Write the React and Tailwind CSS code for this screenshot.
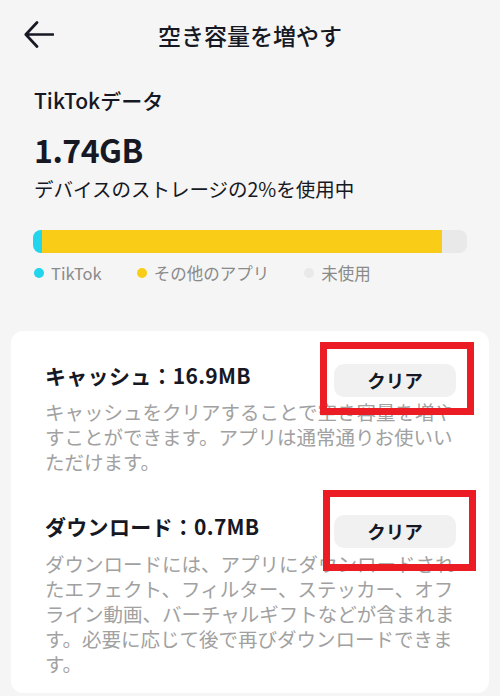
/**
 * FreeUpSpace — TikTok storage screen (空き容量を増やす)
 */
const items = [
  {
    title: 'キャッシュ：16.9MB',
    body: 'キャッシュをクリアすることで空き容量を増やすことができます。アプリは通常通りお使いいただけます。',
    box: 'left-[-14px] right-[-18px] top-[-22px] bottom-[-18px]',
    descGap: 'mt-[2px]',
  },
  {
    title: 'ダウンロード：0.7MB',
    body: 'ダウンロードには、アプリにダウンロードされたエフェクト、フィルター、ステッカー、オフライン動画、バーチャルギフトなどが含まれます。必要に応じて後で再びダウンロードできます。',
    box: 'left-[-11px] right-[-20px] top-[-25px] bottom-[-23px]',
    descGap: 'mt-[3px]',
  },
];

const legend = [
  { label: 'TikTok', dot: 'bg-[#20d5ec]' },
  { label: 'その他のアプリ', dot: 'bg-[#f9cd17]' },
  { label: '未使用', dot: 'bg-[#e9e9e9]' },
];

export default function App() {
  return (
    <div
      className="w-[500px] h-[696px] overflow-hidden bg-[#f5f5f5] text-[#161823] flex flex-col"
      style={{ fontFamily: '"Noto Sans CJK JP", "Noto Sans", sans-serif' }}
    >
      {/* Header */}
      <header className="h-[70px] shrink-0 grid grid-cols-[1fr_auto_1fr] items-center">
        <div className="pl-[24px] flex items-center">
          <svg width="30" height="28" viewBox="0 0 30 28" fill="none">
            <path d="M29 13.5H2.5M13 1.5L1.8 13.5L13 25.5" stroke="#161823" strokeWidth="2.7" strokeLinecap="round" strokeLinejoin="round" />
          </svg>
        </div>
        <h1 className="text-[23px] leading-[30px] font-medium">空き容量を増やす</h1>
        <div />
      </header>

      {/* Storage summary */}
      <section className="px-[34px] shrink-0">
        <div className="mt-[16px] text-[21px] leading-[28px] font-medium">TikTokデータ</div>
        <div className="mt-[15px] text-[32px] leading-[40px] font-bold tracking-[-0.5px]">1.74GB</div>
        <div className="mt-[7px] text-[19.5px] leading-[26px]">デバイスのストレージの2%を使用中</div>

        <div className="mt-[28px] -ml-px w-[434px] h-[23px] rounded-[8px] bg-[#e9e9e9] overflow-hidden flex">
          <div className="w-[9px] bg-[#20d5ec]" />
          <div className="w-[400px] bg-[#f9cd17]" />
        </div>

        <div className="mt-[8px] h-[24px] flex items-center gap-[35px] text-[16.5px] leading-[24px] text-[#8a8a8a]">
          {legend.map(l => (
            <div key={l.label} className="flex items-center gap-[7px]">
              <span className={`w-[10px] h-[10px] rounded-full ${l.dot}`} />
              <span>{l.label}</span>
            </div>
          ))}
        </div>
      </section>

      {/* Card */}
      <section className="mt-[46px] mx-[11px] rounded-[12px] bg-white pl-[34px] pr-[33px] pt-[33px] pb-[17px] flex flex-col gap-[41px]">
        {items.map(it => (
          <div key={it.title}>
            <div className="flex items-start justify-between">
              <div className="text-[21px] leading-[22px] font-bold tracking-[0.3px]">{it.title}</div>
              <div className="relative">
                <button className="w-[122px] h-[33px] rounded-[10px] bg-[#f1f1f1] text-[18.5px] font-bold leading-none text-[#161823]">
                  クリア
                </button>
                <div className={`absolute ${it.box} border-[7px] border-[#ec1c24] pointer-events-none`} />
              </div>
            </div>
            <p className={`${it.descGap} w-[412px] text-[19.5px] leading-[25px] text-[#a1a1a1]`}>{it.body}</p>
          </div>
        ))}
      </section>
    </div>
  );
}
